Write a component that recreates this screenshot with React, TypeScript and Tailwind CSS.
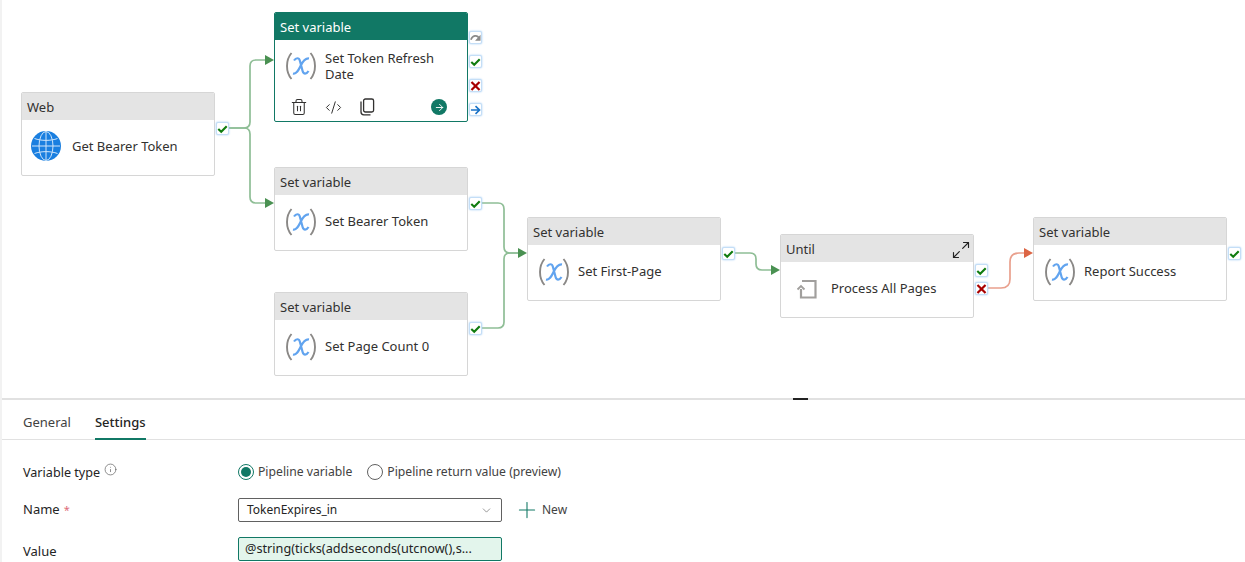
import { CodeXml, Trash2, ArrowRight, Plus, ChevronDown, Info, Maximize2 } from "lucide-react";

const font = "font-['Noto_Sans','Open_Sans',sans-serif]";

function CheckMark() {
  return (
    <svg viewBox="0 0 12 12" className="w-[12px] h-[12px]">
      <path d="M1.4 6 L4.6 9 L10.6 2.9" fill="none" stroke="#107c10" strokeWidth="2.3" />
    </svg>
  );
}

function CrossMark() {
  return (
    <svg viewBox="0 0 12 12" className="w-[12px] h-[12px]">
      <path d="M1.6 1.6 L10.4 10.4 M10.4 1.6 L1.6 10.4" fill="none" stroke="#a80000" strokeWidth="2.4" />
    </svg>
  );
}

function SkipMark() {
  return (
    <svg viewBox="0 0 12 12" className="w-[12px] h-[12px]">
      <path d="M1 8 C2.5 3 8 2 10 6.5" fill="none" stroke="#8a8a8a" strokeWidth="1.8" />
      <path d="M11.5 2.5 V9 H5.5 Z" fill="#8a8a8a" />
    </svg>
  );
}

function NextMark() {
  return (
    <svg viewBox="0 0 12 12" className="w-[12px] h-[12px]">
      <path d="M1 6 H10 M6 1.8 L10.4 6 L6 10.2" fill="none" stroke="#1a73c7" strokeWidth="1.8" />
    </svg>
  );
}

function Port({ x, y, children }: { x: number; y: number; children: React.ReactNode }) {
  return (
    <div
      className="absolute w-[13px] h-[13px] flex items-center justify-center bg-white border border-[#c4def7] rounded-[2px] shadow-[0_0_2px_#9cc9f3]"
      style={{ left: x, top: y - 6 }}
    >
      {children}
    </div>
  );
}

function VarIcon() {
  return (
    <svg viewBox="0 0 34 32" className="w-[34px] h-[32px] shrink-0">
      <path d="M7.5 3 C1.5 10 1.5 22 7.5 29" fill="none" stroke="#8a8886" strokeWidth="1.9" />
      <path d="M26.5 3 C32.5 10 32.5 22 26.5 29" fill="none" stroke="#8a8886" strokeWidth="1.9" />
      <path
        d="M10 10.5 C12 7.5 15 7.5 15.8 10.5 L18.6 21 C19.5 24.5 22.5 24.5 24.5 21 M25 8.5 C21.5 8 18.5 12 16.5 16 C14.5 20 12.5 24.5 9 23.5"
        fill="none"
        stroke="#62a4ef"
        strokeWidth="2.2"
      />
    </svg>
  );
}

function GlobeIcon() {
  return (
    <svg viewBox="0 0 30 30" className="w-[30px] h-[30px] shrink-0 mb-[2px]">
      <circle cx="15" cy="15" r="15" fill="#1a7fe0" />
      <g fill="none" stroke="#cfe5fa" strokeWidth="1">
        <ellipse cx="15" cy="15" rx="7" ry="14.5" />
        <path d="M15 0.5 V29.5 M1 15 H29 M3.5 7.5 C10 10 20 10 26.5 7.5 M3.5 22.5 C10 20 20 20 26.5 22.5" />
      </g>
    </svg>
  );
}

function LoopIcon() {
  return (
    <svg viewBox="0 0 22 22" className="w-[22px] h-[22px] shrink-0">
      <path d="M6 3 H19.5 V19.5 H5 V11" fill="none" stroke="#a19f9d" strokeWidth="2.2" />
      <path d="M1.5 11.5 L5 8 L8.5 11.5" fill="none" stroke="#a19f9d" strokeWidth="1.8" />
    </svg>
  );
}

function CopyIcon() {
  return (
    <svg viewBox="0 0 16 18" className="w-[16px] h-[18px] ml-[17px]">
      <rect x="4.6" y="1" width="10" height="13" rx="1.8" fill="none" stroke="#323130" strokeWidth="1.3" />
      <path d="M2 3.6 V14 C2 15.8 3 16.8 4.8 16.8 H11.5" fill="none" stroke="#323130" strokeWidth="1.3" />
    </svg>
  );
}

function Node({
  x,
  y,
  type,
  name,
  icon,
  gap = "gap-[7px]",
  iconPad = "pl-[9px]",
  expand,
}: {
  x: number;
  y: number;
  type: string;
  name: string;
  icon: React.ReactNode;
  gap?: string;
  iconPad?: string;
  expand?: boolean;
}) {
  return (
    <div
      className="absolute w-[194px] h-[84px] bg-white border border-[#d6d6d6] rounded-[2px] overflow-hidden"
      style={{ left: x, top: y }}
    >
      <div className="h-[27px] bg-[#e4e4e4] pl-[5px] pt-[2px] flex items-center justify-between text-[13px] text-[#323130]">
        {type}
        {expand && <Maximize2 className="w-[20px] h-[20px] mr-[2px] text-[#222]" strokeWidth={1.4} />}
      </div>
      <div className={`flex items-center h-[56px] pb-[3px] ${gap} ${iconPad} text-[13px] text-[#323130]`}>
        {icon}
        <span className="pt-[1px]">{name}</span>
      </div>
    </div>
  );
}

function SelectedNode() {
  return (
    <div className="absolute left-[274px] top-[12px] w-[194px] h-[110px] bg-white border border-[#117865] rounded-[2px] overflow-hidden">
      <div className="h-[27px] bg-[#117865] pl-[5px] pt-[2px] flex items-center text-[13px] text-white">Set variable</div>
      <div className="flex items-center gap-[7px] pl-[9px] pt-[10px] text-[13px] leading-[16px] text-[#323130]">
        <VarIcon />
        <span className="w-[130px]">Set Token Refresh Date</span>
      </div>
      <div className="flex items-center pl-[15px] pt-[16px] text-[#323130]">
        <Trash2 className="w-[18px] h-[18px]" strokeWidth={1.4} />
        <CodeXml className="w-[17px] h-[17px] ml-[17px]" strokeWidth={1.4} />
        <CopyIcon />
        <div className="w-[16px] h-[16px] ml-[56px] rounded-full bg-[#117865] flex items-center justify-center">
          <ArrowRight className="w-[11px] h-[11px] text-white" strokeWidth={2} />
        </div>
      </div>
    </div>
  );
}

function Connectors() {
  const green = "#8fbe96";
  const dark = "#4a9152";
  return (
    <svg className="absolute left-0 top-0 w-[1245px] h-[398px]" viewBox="0 0 1245 398">
      <g fill="none" stroke={green} strokeWidth="1.7">
        <path d="M229 128 H244 Q250 128 250 122 V66 Q250 60 256 60 H266" />
        <path d="M229 128 H244 Q250 128 250 134 V197 Q250 203 256 203 H266" />
        <path d="M481 203 H498 Q504 203 504 209 V247 Q504 253 510 253 H520" />
        <path d="M481 328 H498 Q504 328 504 322 V259 Q504 253 510 253 H520" />
        <path d="M734 253 H750 Q756 253 756 259 V264 Q756 270 762 270 H772" />
      </g>
      <path d="M1001 288 Q1010 288 1010 279 V262 Q1010 253 1019 253 H1026 M987 288 H1001" fill="none" stroke="#e9a08d" strokeWidth="1.7" />
      <g fill={dark}>
        <path d="M265 55 L274 60 L265 65 Z" />
        <path d="M265 198 L274 203 L265 208 Z" />
        <path d="M518 248 L527 253 L518 258 Z" />
        <path d="M771 265 L780 270 L771 275 Z" />
      </g>
      <path d="M1024 248 L1033 253 L1024 258 Z" fill="#dc6544" />
    </svg>
  );
}

function Radio({ checked, label }: { checked?: boolean; label: string }) {
  return (
    <div className="flex items-center gap-[4px]">
      <div
        className={`w-[16px] h-[16px] rounded-full border flex items-center justify-center ${
          checked ? "border-[#117865]" : "border-[#616161]"
        }`}
      >
        {checked && <div className="w-[10px] h-[10px] rounded-full bg-[#117865]" />}
      </div>
      <span>{label}</span>
    </div>
  );
}

export default function App() {
  return (
    <div className={`relative w-[1245px] h-[562px] overflow-hidden bg-white ${font}`}>
      <div className="relative h-[398px]">
        <Connectors />
        <Node x={21} y={92} type="Web" name="Get Bearer Token" icon={<GlobeIcon />} gap="gap-[11px]" />
        <SelectedNode />
        <Node x={274} y={167} type="Set variable" name="Set Bearer Token" icon={<VarIcon />} />
        <Node x={274} y={292} type="Set variable" name="Set Page Count 0" icon={<VarIcon />} />
        <Node x={527} y={217} type="Set variable" name="Set First-Page" icon={<VarIcon />} />
        <Node
          x={780}
          y={234}
          type="Until"
          name="Process All Pages"
          icon={<LoopIcon />}
          gap="gap-[13px]"
          iconPad="pl-[15px]"
          expand
        />
        <Node x={1033} y={217} type="Set variable" name="Report Success" icon={<VarIcon />} />

        <Port x={216} y={128}><CheckMark /></Port>
        <Port x={469} y={37}><SkipMark /></Port>
        <Port x={469} y={61}><CheckMark /></Port>
        <Port x={469} y={85}><CrossMark /></Port>
        <Port x={469} y={109}><NextMark /></Port>
        <Port x={469} y={203}><CheckMark /></Port>
        <Port x={469} y={328}><CheckMark /></Port>
        <Port x={722} y={253}><CheckMark /></Port>
        <Port x={975} y={270}><CheckMark /></Port>
        <Port x={975} y={288}><CrossMark /></Port>
        <Port x={1228} y={253}><CheckMark /></Port>
      </div>

      <div className="relative h-[2px] bg-[#e1e1e1]">
        <div className="absolute left-[793px] top-0 w-[15px] h-[2px] bg-[#222]" />
      </div>

      <div className="flex gap-[24px] h-[40px] px-[23px] border-b border-[#e1e1e1] text-[13px] text-[#424242]">
        <div className="pt-[13px]">General</div>
        <div className="pt-[13px] h-[40px] border-b-[2px] border-[#117865] font-medium text-[#242424]">Settings</div>
      </div>

      <div className="grid grid-cols-[215px_1fr] px-[23px] pt-[20px] text-[13px] text-[#242424] items-center">
        <div className="h-[24px] flex items-center mt-[1px] text-[12.6px]">
          Variable type
          <Info className="w-[13px] h-[13px] ml-[4px] mb-[8px] text-[#616161]" strokeWidth={1.3} />
        </div>
        <div className="h-[24px] flex items-center gap-[15px] text-[12.2px] text-[#424242]">
          <Radio checked label="Pipeline variable" />
          <Radio label="Pipeline return value (preview)" />
        </div>

        <div className="mt-[12px] h-[24px] flex items-center">
          Name<span className="ml-[4px] text-[11px] text-[#dd6b7a]">*</span>
        </div>
        <div className="mt-[12px] flex items-center">
          <div className="w-[264px] h-[24px] flex items-center justify-between pl-[8px] pr-[8px] border border-[#616161] rounded-[2px] text-[12px]">
            TokenExpires_in
            <ChevronDown className="w-[13px] h-[13px] text-[#616161]" strokeWidth={1.2} />
          </div>
          <Plus className="w-[26px] h-[26px] ml-[12px] text-[#117865]" strokeWidth={1} />
          <span className="ml-[2px] text-[12px] text-[#424242]">New</span>
        </div>

        <div className="mt-[14px] h-[24px] flex items-center pt-[5px]">Value</div>
        <div className="mt-[14px] w-[264px] h-[24px] flex items-center pl-[6px] bg-[#e3f5ec] border border-[#117865] rounded-[2px] text-[12.7px]">
          @string(ticks(addseconds(utcnow(),s...
        </div>
      </div>

      <div className="absolute left-0 top-0 bottom-0 w-[2px] bg-[#f2f2f2]" />
    </div>
  );
}
